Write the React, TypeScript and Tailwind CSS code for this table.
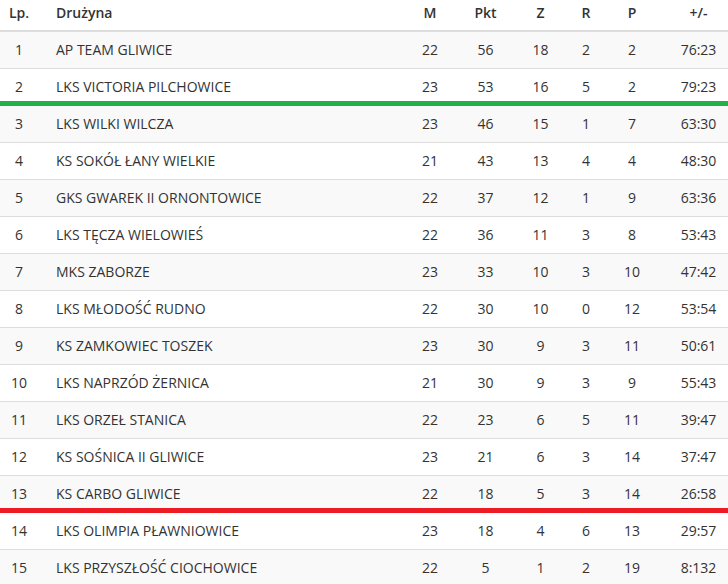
import React from 'react'

type Row = {
  lp: number
  team: string
  m: number
  pkt: number
  z: number
  r: number
  p: number
  goals: string
}

const rows: Row[] = [
  { lp: 1, team: 'AP TEAM GLIWICE', m: 22, pkt: 56, z: 18, r: 2, p: 2, goals: '76:23' },
  { lp: 2, team: 'LKS VICTORIA PILCHOWICE', m: 23, pkt: 53, z: 16, r: 5, p: 2, goals: '79:23' },
  { lp: 3, team: 'LKS WILKI WILCZA', m: 23, pkt: 46, z: 15, r: 1, p: 7, goals: '63:30' },
  { lp: 4, team: 'KS SOKÓŁ ŁANY WIELKIE', m: 21, pkt: 43, z: 13, r: 4, p: 4, goals: '48:30' },
  { lp: 5, team: 'GKS GWAREK II ORNONTOWICE', m: 22, pkt: 37, z: 12, r: 1, p: 9, goals: '63:36' },
  { lp: 6, team: 'LKS TĘCZA WIELOWIEŚ', m: 22, pkt: 36, z: 11, r: 3, p: 8, goals: '53:43' },
  { lp: 7, team: 'MKS ZABORZE', m: 23, pkt: 33, z: 10, r: 3, p: 10, goals: '47:42' },
  { lp: 8, team: 'LKS MŁODOŚĆ RUDNO', m: 22, pkt: 30, z: 10, r: 0, p: 12, goals: '53:54' },
  { lp: 9, team: 'KS ZAMKOWIEC TOSZEK', m: 23, pkt: 30, z: 9, r: 3, p: 11, goals: '50:61' },
  { lp: 10, team: 'LKS NAPRZÓD ŻERNICA', m: 21, pkt: 30, z: 9, r: 3, p: 9, goals: '55:43' },
  { lp: 11, team: 'LKS ORZEŁ STANICA', m: 22, pkt: 23, z: 6, r: 5, p: 11, goals: '39:47' },
  { lp: 12, team: 'KS SOŚNICA II GLIWICE', m: 23, pkt: 21, z: 6, r: 3, p: 14, goals: '37:47' },
  { lp: 13, team: 'KS CARBO GLIWICE', m: 22, pkt: 18, z: 5, r: 3, p: 14, goals: '26:58' },
  { lp: 14, team: 'LKS OLIMPIA PŁAWNIOWICE', m: 23, pkt: 18, z: 4, r: 6, p: 13, goals: '29:57' },
  { lp: 15, team: 'LKS PRZYSZŁOŚĆ CIOCHOWICE', m: 22, pkt: 5, z: 1, r: 2, p: 19, goals: '8:132' },
]

const grid = 'grid grid-cols-[38px_365px_54px_57px_53px_38px_54px_69px] items-center'

export default function App() {
  return (
    <div className="w-[728px] h-[584px] overflow-hidden bg-white text-[14px] text-[#333] font-['Open_Sans',sans-serif]">
      <div className={`${grid} h-[32px] pb-[6px] border-b-2 border-[#ddd] font-semibold`}>
        <div className="text-center">Lp.</div>
        <div className="pl-[18px]">Drużyna</div>
        <div className="text-center">M</div>
        <div className="text-center">Pkt</div>
        <div className="text-center">Z</div>
        <div className="text-center">R</div>
        <div className="text-center">P</div>
        <div className="text-center pl-[10px]">+/-</div>
      </div>
      {rows.map((row, i) => {
        let line = 'border-[#ddd]'
        if (row.lp === 2) line = 'border-[#22b04b] shadow-[inset_0_-4px_0_#22b04b]'
        if (row.lp === 13) line = 'border-[#ed1c24] shadow-[inset_0_-4px_0_#ed1c24]'
        return (
          <div
            key={row.lp}
            className={`${grid} h-[37px] pb-[2px] border-b ${line} ${i % 2 === 0 ? 'bg-[#f9f9f9]' : 'bg-white'}`}
          >
            <div className="text-center">{row.lp}</div>
            <div className="pl-[18px]">{row.team}</div>
            <div className="text-center">{row.m}</div>
            <div className="text-center">{row.pkt}</div>
            <div className="text-center">{row.z}</div>
            <div className="text-center">{row.r}</div>
            <div className="text-center">{row.p}</div>
            <div className="text-center pl-[10px]">{row.goals}</div>
          </div>
        )
      })}
    </div>
  )
}
